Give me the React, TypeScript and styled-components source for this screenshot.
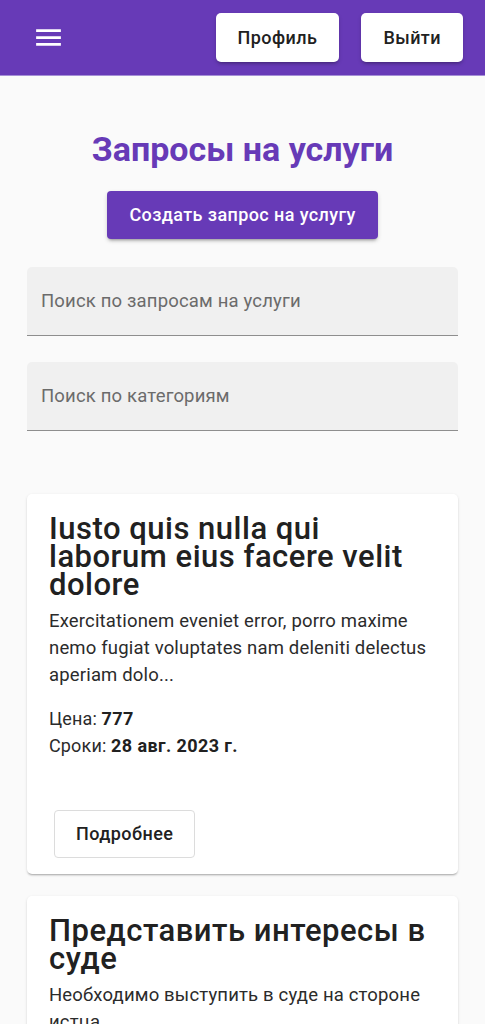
import React from 'react'
import styled, { createGlobalStyle } from 'styled-components'

const GlobalStyle = createGlobalStyle`
    html, body {
        margin: 0;
        padding: 0;
        height: 1024px;
        overflow: hidden;
        background: #fafafa;
        font-family: Roboto, "Noto Sans", Arial, sans-serif;
        color: #212121;
    }
    * { box-sizing: border-box; }
`

const Header = styled.header`
    height: 76px;
    background: #673ab7;
    border-bottom: 1px solid #a58fd6;
    display: flex;
    align-items: center;
    padding: 0 22px 0 32px;
`

const MenuButton = styled.button`
    width: 33px;
    height: 33px;
    padding: 0;
    border: none;
    background: none;
    display: flex;
    cursor: pointer;
`

const HeaderActions = styled.div`
    margin-left: auto;
    display: flex;
    gap: 22px;
`

const HeaderButton = styled.button`
    height: 49px;
    padding: 0 22px;
    border: none;
    border-radius: 5px;
    background: #fff;
    color: #212121;
    font: 500 18px/1 Roboto, sans-serif;
    letter-spacing: 0.45px;
    box-shadow: 0 3px 3px -2px rgba(0,0,0,0.25), 0 2px 4px rgba(0,0,0,0.14);
    cursor: pointer;
`

const Main = styled.main`
    padding: 0 27px;
    display: flex;
    flex-direction: column;
`

const Title = styled.h1`
    margin: 53px 0 0;
    text-align: center;
    color: #673ab7;
    font: 700 34px/41px Roboto, sans-serif;
`

const PrimaryButton = styled.button`
    align-self: center;
    margin-top: 21px;
    height: 48px;
    padding: 0 22px;
    border: none;
    border-radius: 4px;
    background: #673ab7;
    color: #fff;
    font: 500 18px/1 Roboto, sans-serif;
    letter-spacing: 0.4px;
    box-shadow: 0 3px 3px -2px rgba(0,0,0,0.3), 0 2px 4px rgba(0,0,0,0.16);
    cursor: pointer;
`

const Fields = styled.div`
    margin-top: 28px;
    display: flex;
    flex-direction: column;
    gap: 26px;
`

const SearchField = styled.input`
    height: 69px;
    width: 100%;
    padding: 0 14px;
    border: none;
    border-bottom: 1px solid #8e8e8e;
    border-radius: 5px 5px 0 0;
    background: #f0f0f0;
    font: 400 18.5px Roboto, sans-serif;
    letter-spacing: 0.17px;
    color: #212121;
    outline: none;
    &::placeholder {
        color: #6b6b6b;
        opacity: 1;
    }
`

const CardList = styled.div`
    margin-top: 63px;
    display: flex;
    flex-direction: column;
    gap: 22px;
`

const Card = styled.article`
    background: #fff;
    border-radius: 5px;
    box-shadow: 0 2px 2px -1px rgba(0,0,0,0.25), 0 1px 3px rgba(0,0,0,0.12);
    display: flex;
    flex-direction: column;
`

const CardBody = styled.div`
    padding: 21px 22px 0;
`

const CardTitle = styled.h2`
    margin: 0;
    font: 500 31px/28px Roboto, sans-serif;
    letter-spacing: 0.5px;
    color: #212121;
`

const CardText = styled.p`
    margin: 9px 0 0;
    font: 400 18.5px/27px Roboto, sans-serif;
    letter-spacing: 0.17px;
    color: #2b2b2b;
`

const Meta = styled.div`
    margin-top: 16px;
    font: 400 18px/27px Roboto, sans-serif;
    letter-spacing: 0.15px;
    color: #2b2b2b;
    b { font-weight: 700; color: #212121; letter-spacing: 0.4px; }
`

const CardActions = styled.div`
    padding: 51px 0 16px 27px;
`

const OutlineButton = styled.button`
    height: 48px;
    padding: 0 21px;
    border: 1px solid #dcdcdc;
    border-radius: 4px;
    background: #fff;
    color: #212121;
    font: 500 18px/1 Roboto, sans-serif;
    letter-spacing: 0.45px;
    cursor: pointer;
`

type Request = {
    title: string
    text: string
    price: string
    date: string
}

const requests: Request[] = [
    {
        title: 'Iusto quis nulla qui laborum eius facere velit dolore',
        text: 'Exercitationem eveniet error, porro maxime nemo fugiat voluptates nam deleniti delectus aperiam dolo...',
        price: '777',
        date: '28 авг. 2023 г.',
    },
    {
        title: 'Представить интересы в суде',
        text: 'Необходимо выступить в суде на стороне истца...',
        price: '15000',
        date: '30 авг. 2023 г.',
    },
]

const MenuIcon: React.FC = () => (
    <svg width="33" height="33" viewBox="0 0 24 24" fill="#fff">
        <path d="M3 18h18v-2H3v2zm0-5h18v-2H3v2zm0-7v2h18V6H3z" />
    </svg>
)

const RequestCard: React.FC<{ item: Request }> = ({ item }) => (
    <Card>
        <CardBody>
            <CardTitle>{item.title}</CardTitle>
            <CardText>{item.text}</CardText>
            <Meta>
                <div>Цена: <b>{item.price}</b></div>
                <div>Сроки: <b>{item.date}</b></div>
            </Meta>
        </CardBody>
        <CardActions>
            <OutlineButton>Подробнее</OutlineButton>
        </CardActions>
    </Card>
)

const App: React.FC = () => {
    return (
        <>
            <GlobalStyle />
            <Header>
                <MenuButton aria-label="menu"><MenuIcon /></MenuButton>
                <HeaderActions>
                    <HeaderButton>Профиль</HeaderButton>
                    <HeaderButton>Выйти</HeaderButton>
                </HeaderActions>
            </Header>
            <Main>
                <Title>Запросы на услуги</Title>
                <PrimaryButton>Создать запрос на услугу</PrimaryButton>
                <Fields>
                    <SearchField placeholder="Поиск по запросам на услуги" />
                    <SearchField placeholder="Поиск по категориям" />
                </Fields>
                <CardList>
                    {requests.map((r) => (
                        <RequestCard key={r.title} item={r} />
                    ))}
                </CardList>
            </Main>
        </>
    )
}

export default App
